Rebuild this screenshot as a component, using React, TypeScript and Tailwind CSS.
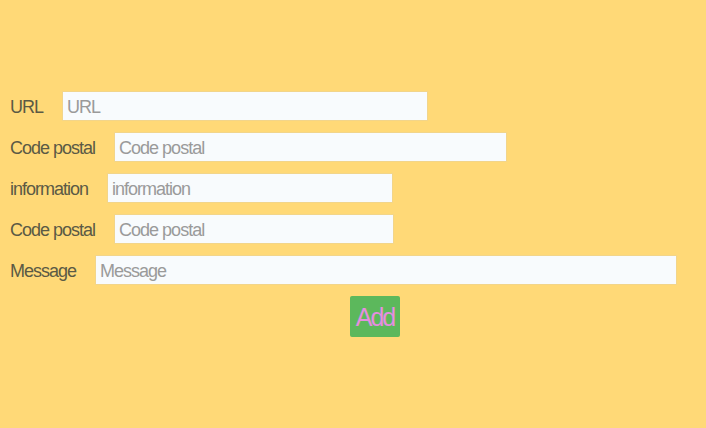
import React from "react";

const rows = [
  { label: "URL", w: "w-[366px]" },
  { label: "Code postal", w: "w-[393px]" },
  { label: "information", w: "w-[286px]" },
  { label: "Code postal", w: "w-[280px]" },
  { label: "Message", w: "w-[582px]" },
];

const font = { fontFamily: '"Liberation Sans", Arial, sans-serif' };

export default function App() {
  return (
    <div className="w-[706px] h-[428px] bg-[#ffd977] pt-[91px] px-[10px]" style={font}>
      <div className="flex flex-col gap-[11px]">
        {rows.map((r, i) => (
          <div key={i} className="flex items-center h-[30px]">
            <label className="text-[18px] text-[#5b5a45] mr-[19px] tracking-[-1px] pt-[3px]">{r.label}</label>
            <input
              placeholder={r.label}
              style={font}
              className={`${r.w} h-[30px] bg-[#f8fbfd] border border-[#f2d58a] px-[4px] pt-[3px] text-[18px] tracking-[-1px] placeholder:text-[#9a9a9a] outline-none`}
            />
          </div>
        ))}
      </div>
      <div className="flex justify-center mt-[11px] pl-[44px]">
        <button className="w-[50px] h-[41px] bg-[#5cb85c] rounded-[2px] pt-[3px] text-[25px] tracking-[-2px] text-[#e58ee0]">
          Add
        </button>
      </div>
    </div>
  );
}
